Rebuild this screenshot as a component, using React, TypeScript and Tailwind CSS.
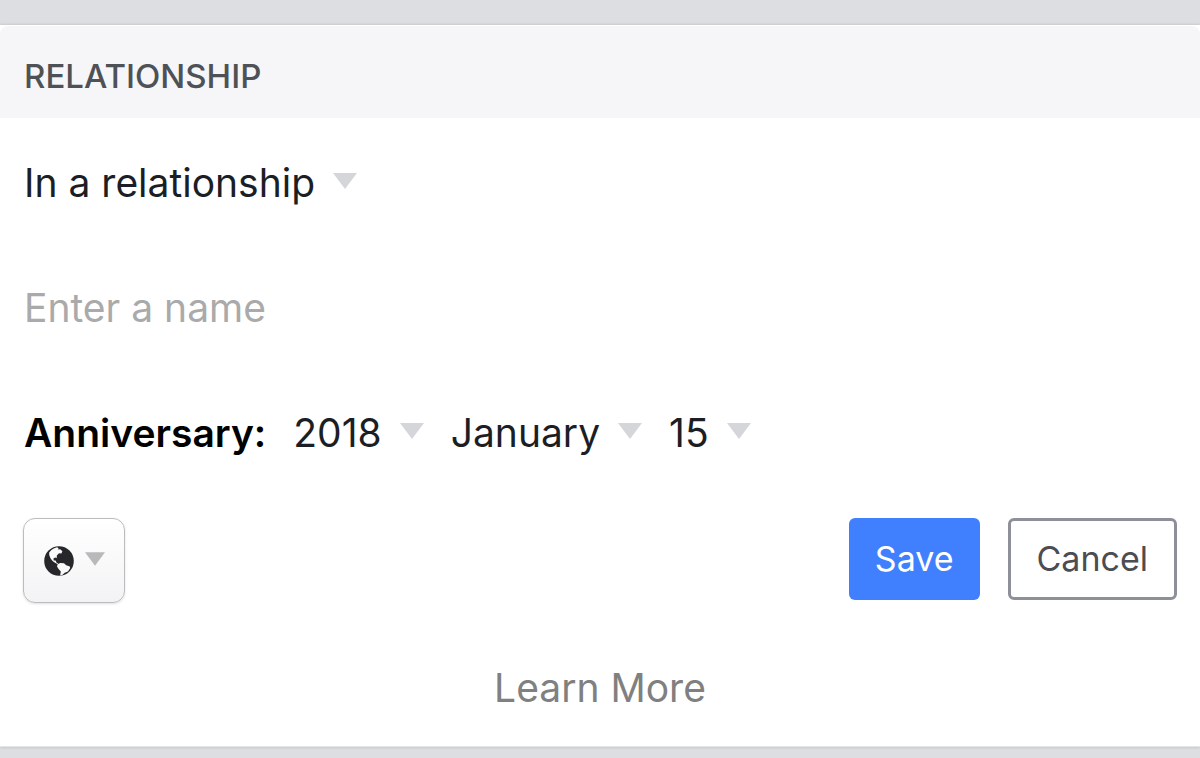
import type { SelectHTMLAttributes } from "react";

function Caret({ className }: { className: string }) {
  return (
    <svg viewBox="0 0 24 16" aria-hidden="true" className={className}>
      <path d="M0 0H24L12 16Z" fill="currentColor" />
    </svg>
  );
}

function Picker({ options, ...rest }: { options: string[] } & SelectHTMLAttributes<HTMLSelectElement>) {
  return (
    <span className="inline-flex items-center gap-[18px]">
      <select
        {...rest}
        className="h-12 appearance-none bg-transparent leading-12 text-[#1c1e26] outline-none [field-sizing:content]"
      >
        {options.map((o) => (
          <option key={o}>{o}</option>
        ))}
      </select>
      <Caret className="-mt-1 h-4 w-6 text-[#d5d6da]" />
    </span>
  );
}

function Globe() {
  return (
    <svg viewBox="0 0 30 30" aria-hidden="true" className="size-[30px]">
      <circle cx="15" cy="15" r="14.8" fill="#25272b" />
      <path
        fill="#fafafa"
        d="M5.2 6.4C7.4 3.6 10 1.8 13 1.2L14.6 2.2L14 3.6L16.2 3.2L18.4 5.2L17.4 7.4L15 7.2L12.8 9.6L12.8 12L11.2 11.4L9.4 12.4L9.8 14.4L11.6 14.6L12.6 16.8L14.4 17.4L13.4 18L11 16.8L8.6 15L6.6 12.4L5.2 9Z"
      />
      <path
        fill="#fafafa"
        d="M13.6 18.2L16.2 17L20 17.2L22.2 19.2L25.8 20.4L26.2 22L24 25.4L20.8 26.8L18.2 29L16.2 29.4L16.8 25.6L14.6 23L13 20.4Z"
      />
    </svg>
  );
}

export default function App() {
  return (
    <div className="min-h-screen bg-[#dddee2] pt-[25px] font-['Inter',sans-serif] text-[39px] leading-12">
      <main className="border-y border-t-white border-b-[#e6e6e8] bg-white shadow-[0_0_3px_rgba(0,0,0,0.18)]">
        <header className="rounded-t-lg bg-[#f6f6f8] px-6 pt-[30px] pb-[22px]">
          <h1 className="text-[33px] leading-10 font-medium text-[#4e5156]">RELATIONSHIP</h1>
        </header>

        <form className="flex flex-col px-6 pt-[41px] pb-[34px]" onSubmit={(e) => e.preventDefault()}>
          <div className="flex">
            <Picker
              aria-label="Relationship status"
              options={["In a relationship", "Single", "Engaged", "Married"]}
            />
          </div>

          <input
            type="text"
            aria-label="Name"
            placeholder="Enter a name"
            className="mt-[77px] h-12 w-full bg-transparent outline-none placeholder:text-[#aaaaaa]"
          />

          <fieldset className="mt-[77px] flex flex-wrap items-center gap-x-[27px]">
            <legend className="float-left font-semibold text-black">Anniversary:</legend>
            <Picker aria-label="Year" options={["2018", "2017", "2016"]} />
            <Picker aria-label="Month" options={["January", "February", "March"]} />
            <Picker aria-label="Day" options={["15", "16", "17"]} />
          </fieldset>

          <div className="-mx-px mt-[61px] flex items-start justify-between">
            <button
              type="button"
              aria-label="Audience: Public"
              className="flex h-[85px] w-[102px] items-center justify-center gap-[11px] rounded-xl border border-[#bcbcbe] bg-linear-to-b from-white to-[#f3f3f5] shadow-sm"
            >
              <Globe />
              <Caret className="-mt-1 h-[14px] w-5 text-[#b9b9bb]" />
            </button>
            <div className="flex gap-7 text-[34px]">
              <button type="submit" className="h-[82px] rounded-md bg-[#4080ff] px-[26px] text-white">
                Save
              </button>
              <button
                type="button"
                className="h-[82px] rounded-md border-3 border-[#8d9099] bg-white px-[26px] text-[#4b4d52]"
              >
                Cancel
              </button>
            </div>
          </div>

          <a href="#learn-more" className="mt-[61px] self-center text-[#808080]">
            Learn More
          </a>
        </form>
      </main>
    </div>
  );
}
